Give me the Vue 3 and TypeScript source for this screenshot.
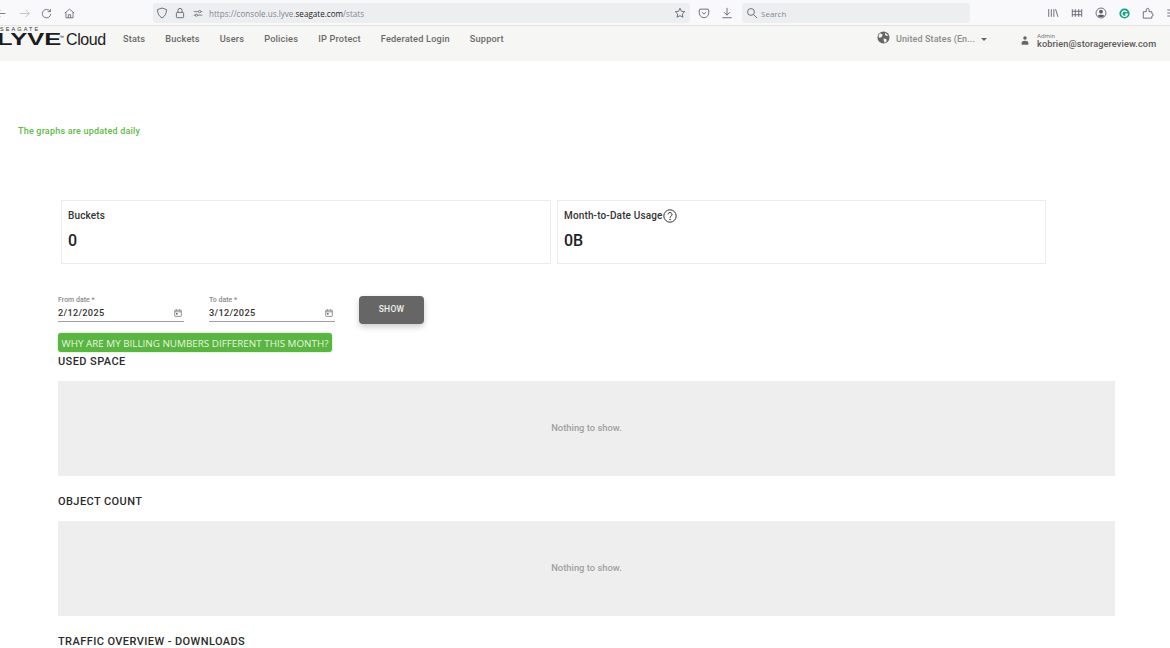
<script setup lang="ts">
const navItems: string[] = ['Stats', 'Buckets', 'Users', 'Policies', 'IP Protect', 'Federated Login', 'Support']
const dates = [
  { label: 'From date *', value: '2/12/2025' },
  { label: 'To date *', value: '3/12/2025' },
]
const sections = [
  { title: 'USED SPACE', empty: true },
  { title: 'OBJECT COUNT', empty: true },
  { title: 'TRAFFIC OVERVIEW - DOWNLOADS', empty: false },
]
</script>

<template>
  <div class="page">
    <div class="toolbar">
      <div class="tb-nav">
        <svg class="ic" viewBox="0 0 14 14"><path d="M12 7H1M5.500 2.500 1 7l4.500 4.500" /></svg>
        <svg class="ic fwd" viewBox="0 0 14 14"><path d="M1 7h12M8.500 2.500 13 7l-4.500 4.500" /></svg>
        <svg class="ic" viewBox="0 0 14 14"><path d="M11.500 4.200A5.400 5.400 0 1 0 12.400 7.500M12 1.200v3.500H8.500" /></svg>
        <svg class="ic" viewBox="0 0 14 14"><path d="M1 6.500 7 1.500l6 5M2.500 5.500v7h9v-7M5.500 12.500V8.500h3v4" /></svg>
      </div>
      <div class="urlbar">
        <svg class="ic" viewBox="0 0 14 14"><path d="M7 1.200 12.200 3c0 4.500-1.500 7.700-5.200 9.800C3.300 10.700 1.800 7.500 1.800 3z" /></svg>
        <svg class="ic" viewBox="0 0 14 14"><rect x="2.800" y="6.300" width="8.400" height="6.200" rx="1" /><path d="M4.600 6.300V4a2.400 2.400 0 0 1 4.800 0v2.300" /></svg>
        <svg class="ic small" viewBox="0 0 14 14"><path d="M1 5h6.500M11 5h2M1 10h2M6.500 10H13" /><circle cx="9.300" cy="5" r="1.600" /><circle cx="4.700" cy="10" r="1.600" /></svg>
        <span class="url">https://console.us.lyve.<b>seagate.com</b>/stats</span>
        <svg class="ic star" viewBox="0 0 14 14"><path d="M7 1.500 8.700 5l3.800.5-2.800 2.600.7 3.800L7 10.100l-3.400 1.800.7-3.800L1.500 5.500 5.300 5z" /></svg>
      </div>
      <div class="tb-mid">
        <svg class="ic" viewBox="0 0 14 14"><path d="M2.500 2.500h9a1 1 0 0 1 1 1V7a5.500 5.500 0 0 1-11 0V3.500a1 1 0 0 1 1-1zM4.500 6 7 8.300 9.500 6" /></svg>
        <svg class="ic" viewBox="0 0 14 14"><path d="M7 1v8.500M3.500 6 7 9.500 10.500 6M1.500 12.500h11" /></svg>
      </div>
      <div class="searchbar">
        <svg class="ic" viewBox="0 0 14 14"><circle cx="5.800" cy="5.800" r="4" /><path d="m8.800 8.800 4 4" /></svg>
        <span>Search</span>
      </div>
      <div class="tb-right">
        <svg class="ic" viewBox="0 0 14 14"><path d="M2 2.500v9M5 2.500v9M8 2.500v9M10 2.500l2.800 9" /></svg>
        <svg class="ic" viewBox="0 0 14 14"><path d="M1.500 2.500v9M5 2.500v9M9 2.500v9M12.500 2.500v9M1.500 5h11M1.500 9h11" /></svg>
        <svg class="ic" viewBox="0 0 14 14"><circle cx="7" cy="7" r="5.800" /><circle class="fill" cx="7" cy="5.500" r="2.200" /><path class="fill" d="M3 10.500c1-2 7-2 8 0-1.500 1.600-6.500 1.600-8 0z" /></svg>
        <svg class="grammarly" viewBox="0 0 14 14"><circle cx="7" cy="7" r="6.500" fill="#15a085" /><path d="M10 5.200A3.500 3.500 0 1 0 10.500 8H7.800" fill="none" stroke="#fff" stroke-width="1.700" /></svg>
        <svg class="ic" viewBox="0 0 14 14"><path d="M1.500 5.500h3.500V3.200a1.600 1.600 0 0 1 3.200 0v2.300h3.300v2.200a1.500 1.500 0 0 1 0 3v2.300H1.500z" /></svg>
        <svg class="ic" viewBox="0 0 14 14"><path d="M1.500 3.500h11M1.500 7h11M1.500 10.500h11" /></svg>
      </div>
    </div>

    <header class="appbar">
      <div class="logo">
        <span class="seagate">SEAGATE</span>
        <div class="logo-line"><span class="lyve">LYVE</span><span class="tm">™</span><span class="cloud">Cloud</span></div>
      </div>
      <nav class="nav">
        <a v-for="item in navItems" :key="item">{{ item }}</a>
      </nav>
      <div class="lang">
        <svg class="globe" viewBox="0 0 14 14"><circle cx="7" cy="7" r="6.500" fill="#666" /><path d="M3 2.500 6 3.500 5.500 6 3 7.500 1.500 6zM7 8l3 .5.500 2-2 2.300L7.500 11zM9 1.800l3 3-2 .5-1.500-1.500z" fill="#f6f6f5" /></svg>
        <span>United States (En...</span>
        <i class="caret"></i>
      </div>
      <div class="user">
        <svg class="person" viewBox="0 0 10 11"><circle cx="5" cy="2.500" r="2.200" fill="#666" /><path d="M.8 10.800V8.300C.8 6.600 2.500 5.700 5 5.700s4.200.9 4.200 2.600v2.500z" fill="#666" /></svg>
        <div class="user-text">
          <span class="role">Admin</span>
          <span class="mail">kobrien@storagereview.com</span>
        </div>
      </div>
    </header>

    <main class="main">
      <p class="notice">The graphs are updated daily</p>

      <div class="cards">
        <div class="card">
          <div class="card-title">Buckets</div>
          <div class="card-value">0</div>
        </div>
        <div class="card">
          <div class="card-title">Month-to-Date Usage
            <svg class="help" viewBox="0 0 14 14"><circle cx="7" cy="7" r="6.200" /><path d="M5 5.400a2 2 0 1 1 3 1.800c-.7.400-1 .8-1 1.600" /><circle class="dot" cx="7" cy="10.500" r=".8" /></svg>
          </div>
          <div class="card-value">0B</div>
        </div>
      </div>

      <div class="filters">
        <div class="field" v-for="d in dates" :key="d.label">
          <label>{{ d.label }}</label>
          <div class="input">
            <span>{{ d.value }}</span>
            <svg class="cal" viewBox="0 0 8 8"><rect x=".7" y="1.200" width="6.600" height="6.200" rx=".6" /><path d="M.7 2.800h6.600M2.300 .3v1.400M5.700 .3v1.400" /><rect class="cal-dot" x="2" y="4" width="1.600" height="1.600" /></svg>
          </div>
        </div>
        <button class="show" type="button">SHOW</button>
      </div>

      <button class="billing" type="button">WHY ARE MY BILLING NUMBERS DIFFERENT THIS MONTH?</button>

      <section v-for="s in sections" :key="s.title" class="section">
        <h2>{{ s.title }}</h2>
        <div v-if="s.empty" class="empty">Nothing to show.</div>
      </section>
    </main>
  </div>
</template>

<style>
html, body { margin: 0; padding: 0; background: #fff; }
</style>

<style scoped>
.page {
  width: 1170px;
  height: 648px;
  overflow: hidden;
  background: #fff;
  font-family: Roboto, "Liberation Sans", sans-serif;
  color: #2b2b2b;
}
.toolbar {
  height: 26px;
  box-sizing: border-box;
  display: flex;
  align-items: center;
  background: #f9f9fb;
  border-bottom: 1px solid #e2e2e6;
  padding-top: 1px;
}
.ic {
  width: 12px;
  height: 12px;
  flex: none;
  fill: none;
  stroke: #5b5b66;
  stroke-width: 1;
}
.ic .fill { fill: #5b5b66; stroke: none; }
.tb-nav {
  width: 157px;
  margin-left: -4px;
  flex: none;
  display: flex;
  align-items: center;
  gap: 11.500px;
}
.tb-nav .ic { width: 11px; height: 11px; }
.tb-nav .fwd { stroke: #b5b5bb; }
.urlbar {
  width: 537px;
  height: 20px;
  flex: none;
  box-sizing: border-box;
  display: flex;
  align-items: center;
  gap: 6px;
  padding: 0 4px 0 3px;
  background: #edeef0;
  border-radius: 3px;
}
.urlbar .small { width: 10px; height: 10px; margin-left: 1px; }
.url {
  font-size: 8.100px;
  color: #85858f;
  font-family: "Open Sans", sans-serif;
}
.url b { font-weight: 400; color: #222; }
.star { margin-left: auto; }
.tb-mid {
  width: 52px;
  flex: none;
  box-sizing: border-box;
  display: flex;
  justify-content: flex-end;
  gap: 11px;
  padding-right: 9px;
}
.searchbar {
  width: 228px;
  height: 20px;
  flex: none;
  box-sizing: border-box;
  display: flex;
  align-items: center;
  gap: 3px;
  padding-left: 4px;
  background: #edeef0;
  border-radius: 3px;
  font-size: 8px;
  color: #85858f;
  font-family: "Open Sans", sans-serif;
}
.tb-right {
  flex: 1;
  min-width: 0;
  display: flex;
  align-items: center;
  gap: 12px;
  padding-left: 77px;
}
.grammarly { width: 11px; height: 11px; flex: none; }

.appbar {
  height: 35px;
  box-sizing: border-box;
  display: flex;
  align-items: flex-start;
  background: #f6f6f5;
}
.logo {
  width: 123px;
  flex: none;
  height: 35px;
  color: #1c1c1c;
  overflow: hidden;
  font-family: "Liberation Sans", sans-serif;
}
.seagate {
  display: block;
  font-size: 5.500px;
  letter-spacing: 2.100px;
  line-height: 7px;
  color: #333;
}
.logo-line {
  display: flex;
  align-items: baseline;
  margin-left: -3px;
  line-height: 14px;
}
.lyve {
  font-size: 17px;
  font-weight: 700;
  width: 61px;
  display: inline-block;
  transform: scaleX(1.500);
  transform-origin: left;
}
.tm { font-size: 5px; margin-left: 1px; align-self: flex-start; line-height: 8px; width: 7px; }
.cloud { font-size: 16px; letter-spacing: -0.400px; }

.nav {
  display: flex;
  gap: 20px;
  padding-top: 7px;
  flex: none;
  width: 754px;
  font-size: 9.200px;
  font-weight: 500;
  line-height: 12px;
  letter-spacing: .18px;
  color: #6a6a6a;
}
.lang {
  display: flex;
  align-items: center;
  width: 144px;
  flex: none;
  padding-top: 7px;
  font-size: 9px;
  line-height: 12px;
  color: #8c8c8c;
  letter-spacing: .1px;
  font-weight: 500;
}
.globe { width: 13px; height: 13px; margin: -4px 6px 0 0; flex: none; }
.caret {
  width: 0;
  height: 0;
  margin: 0 0 0 6px;
  border-left: 3px solid transparent;
  border-right: 3px solid transparent;
  border-top: 3.500px solid #666;
}
.user {
  display: flex;
  align-items: flex-start;
  gap: 8px;
  padding-top: 7px;
}
.person { width: 8px; height: 11px; margin-top: 2px; flex: none; }
.user-text { display: flex; flex-direction: column; }
.role { font-size: 6.200px; line-height: 6px; color: #777; }
.mail {
  font-size: 9.200px;
  line-height: 10px;
  font-weight: 500;
  color: #5a5a5a;
  letter-spacing: .1px;
  white-space: nowrap;
}

.main { padding: 0 55px 0 58px; }
.notice {
  margin: 64px 0 0 -40px;
  height: 12px;
  font-size: 9px;
  line-height: 12px;
  font-weight: 500;
  color: #62b94a;
  letter-spacing: .2px;
}
.cards {
  display: grid;
  grid-template-columns: 490px 489px;
  gap: 6px;
  margin: 63px 0 0 3px;
}
.card {
  height: 64px;
  box-sizing: border-box;
  border: 1px solid #ececec;
  padding: 9px 6px;
}
.card-title {
  font-size: 10px;
  line-height: 11px;
  font-weight: 500;
  color: #333;
  letter-spacing: .15px;
  display: flex;
  align-items: center;
  height: 11px;
}
.help { width: 14px; height: 14px; fill: none; stroke: #333; stroke-width: 1; flex: none; }
.help .dot { fill: #333; stroke: none; }
.card-value {
  margin-top: 11px;
  font-size: 16px;
  line-height: 18px;
  font-weight: 500;
  color: #222;
}
.filters {
  display: flex;
  align-items: flex-start;
  gap: 25px;
  margin-top: 32px;
  height: 37px;
}
.field { width: 126px; }
.field label {
  display: block;
  font-size: 7px;
  line-height: 8px;
  color: #8a8a8a;
  font-weight: 500;
}
.input {
  display: flex;
  align-items: center;
  justify-content: space-between;
  height: 18px;
  box-sizing: border-box;
  border-bottom: 1px solid #a0a0a0;
  padding: 0 2px 1px 0;
  font-size: 9.200px;
  font-weight: 500;
  color: #333;
  letter-spacing: .3px;
}
.cal { width: 8px; height: 8px; fill: none; stroke: #666; stroke-width: .7; margin-top: 2px; }
.cal .cal-dot { fill: #666; stroke: none; }
.show {
  width: 65px;
  height: 28px;
  margin: 0 0 0 -1px;
  padding: 0 0 3px;
  border: 0;
  border-radius: 4px;
  background: #666;
  color: #f2f2f2;
  font: 500 8.500px Roboto, sans-serif;
  letter-spacing: .3px;
  box-shadow: 0 3px 6px rgba(0, 0, 0, .2);
}
.billing {
  display: block;
  width: 274px;
  height: 19px;
  margin: 0 0 3px;
  padding: 0;
  border: 0;
  border-radius: 3px;
  background: #5bb543;
  color: #e6f6df;
  font: 400 9.850px "Open Sans", sans-serif;
  white-space: nowrap;
  box-shadow: 0 0 2px rgba(91, 181, 67, .6);
}
.section { margin-bottom: 19px; }
.section h2 {
  margin: 0;
  font-size: 11px;
  line-height: 13px;
  font-weight: 500;
  color: #2b2b2b;
  letter-spacing: .42px;
}
.empty {
  margin-top: 13px;
  height: 95px;
  width: 1057px;
  box-sizing: border-box;
  padding-bottom: 2px;
  background: #eeeeee;
  display: flex;
  align-items: center;
  justify-content: center;
  font-size: 9.400px;
  font-weight: 500;
  color: #a0a0a0;
}
</style>
